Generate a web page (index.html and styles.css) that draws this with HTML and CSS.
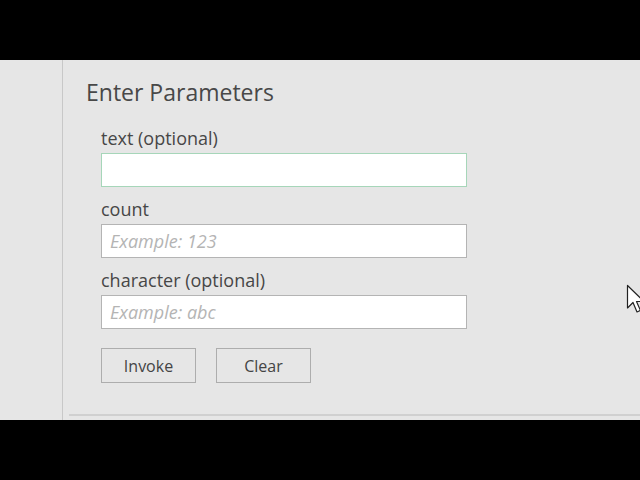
FILE: index.html
```html
<!DOCTYPE html>
<html>
<head>
<meta charset="utf-8">
<link rel="stylesheet" href="styles.css">
</head>
<body>
<div class="bar"></div>
<div class="window">
  <div class="side"></div>
  <div class="main">
    <div class="form">
      <h1 class="title">Enter Parameters</h1>
      <div class="fields">
        <label class="label first">text (optional)</label>
        <input class="input focused" type="text">
        <label class="label">count</label>
        <input class="input" type="text" placeholder="Example: 123">
        <label class="label">character (optional)</label>
        <input class="input" type="text" placeholder="Example: abc">
        <div class="buttons">
          <button class="btn">Invoke</button>
          <button class="btn">Clear</button>
        </div>
      </div>
    </div>
    <div class="rule"></div>
  </div>
  <svg class="cursor" width="20" height="32" viewBox="0 0 20 32">
    <path d="M1.5 1.5 L1.5 24 L7 18.5 L11 28 L14.5 26.5 L10.5 17.5 L18 17.5 Z" fill="#fff" stroke="#222" stroke-width="1.2" stroke-linejoin="round"/>
  </svg>
</div>
<div class="bar"></div>
</body>
</html>
```
FILE: styles.css
```css
html, body {
  margin: 0;
  padding: 0;
  background: #000;
  width: 640px;
  height: 480px;
  overflow: hidden;
}
.bar {
  height: 60px;
  background: #000;
}
.window {
  position: relative;
  height: 360px;
  background: #e6e6e6;
  display: flex;
  overflow: hidden;
  font-family: "Open Sans", "Noto Sans", sans-serif;
  color: #444;
}
.side {
  width: 62px;
  border-right: 1px solid #c8c8c8;
  flex: none;
}
.main {
  flex: 1;
  display: flex;
  flex-direction: column;
}
.form {
  flex: 1;
  padding-left: 23px;
  padding-top: 18px;
}
.title {
  margin: 0;
  font-weight: normal;
  font-size: 23px;
  line-height: 28px;
  color: #484848;
}
.fields {
  margin-left: 15px;
  margin-top: 21px;
  display: flex;
  flex-direction: column;
  align-items: flex-start;
}
.label {
  font-size: 18px;
  line-height: 22px;
  height: 22px;
  margin: 11px 0 4px 0;
  color: #474747;
}
.label.first {
  margin-top: 0;
}
.input {
  box-sizing: border-box;
  width: 366px;
  height: 34px;
  margin: 0;
  border: 1px solid #b4b4b4;
  background: #fff;
  font-family: inherit;
  font-size: 18px;
  padding: 0 8px;
  outline: none;
}
.input.focused {
  border-color: #a6d6b9;
}
.input::placeholder {
  color: #b4b4b4;
  font-style: italic;
}
.buttons {
  display: flex;
  gap: 20px;
  margin-top: 19px;
}
.btn {
  box-sizing: border-box;
  width: 95px;
  height: 35px;
  background: #e6e6e6;
  border: 1px solid #adadad;
  font-family: inherit;
  font-size: 16px;
  color: #444;
  padding: 0;
}
.rule {
  height: 0;
  border-bottom: 2px solid #d0d0d0;
  margin-left: 6px;
  margin-bottom: 4px;
}
.cursor {
  position: absolute;
  left: 626px;
  top: 224px;
}
```
